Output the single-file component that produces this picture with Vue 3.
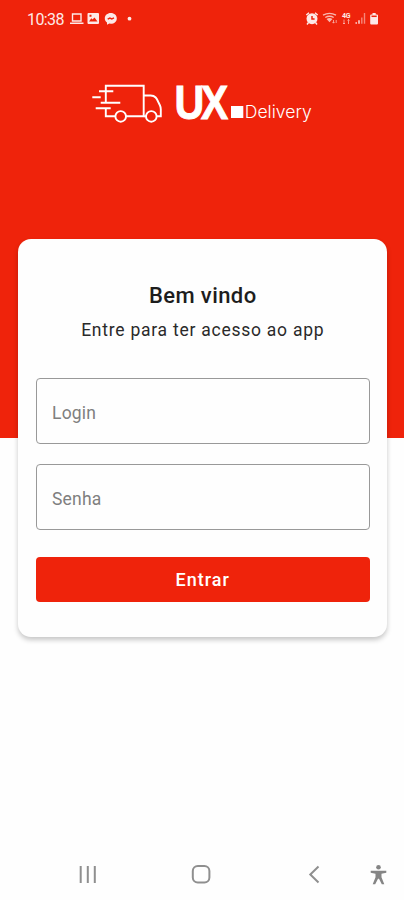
<template>
    <div class="screen">
        <header class="hero">
            <div class="status-bar">
                <span class="clock">10:38</span>
                <svg class="status-left" viewBox="68 8 68 22" width="68" height="22">
                    <path d="M72.500 14h8.500v7H72.500zM70 23.200h13.500" class="line" />
                    <path
                        d="M88.500 13h9.500a1 1 0 0 1 1 1v9a1 1 0 0 1-1 1h-9.500a1 1 0 0 1-1-1v-9a1 1 0 0 1 1-1zM89 21.500h8.500l-3-4-2 2-1.200-1.200zM89.500 14.700v2h2v-2z"
                        fill-rule="evenodd"
                    />
                    <path
                        d="M110.800 13c3.500 0 6 2.300 6 5.400s-2.500 5.300-6 5.300l-1.500-.2-2.300 1.200v-2.200c-1.400-1-2.200-2.400-2.200-4.100 0-3.100 2.500-5.400 6-5.400z"
                    />
                    <path d="M107.700 19.100l2.200-1 1.900.8 2.200-1" class="cut" />
                    <circle cx="129.500" cy="18.700" r="1.900" />
                </svg>
                <svg class="status-right" viewBox="304 8 78 22" width="78" height="22">
                    <circle cx="312" cy="18.700" r="5.500" />
                    <path d="M306.300 15l2.700-2.300M317.700 15l-2.700-2.300M308.500 22.500l-1.500 2M315.500 22.500l1.500 2" class="line" />
                    <path d="M312 16v3h2.600" class="cut" />
                    <g class="soft">
                        <path d="M323 15.200q6.500-3.700 13 0M325.300 17.500q4.200-2.600 8.400 0" class="line" />
                        <path d="M326.500 19l3 3.200 3-3.200q-3-1.800-6 0z" />
                        <path d="M333.500 20v3M332.500 22l1 1.200 1-1.200M336.200 23v-3" class="thin" />
                    </g>
                    <text x="342" y="17.800" class="network" textLength="8.500">4G</text>
                    <path d="M344 19.500v4.500M343 23l1 1 1-1M348.500 24v-4.500M347.500 20.500l1-1 1 1" class="thin soft" />
                    <path d="M356.200 23.800v-1.500M359 23.800v-3.500" class="line" />
                    <path d="M361.800 23.800v-6.300M364.500 23.800V13" class="line faint" />
                    <path d="M372.500 13h3.200v1.400h1.300a1 1 0 0 1 1 1v8a1 1 0 0 1-1 1h-5.800a1 1 0 0 1-1-1v-8a1 1 0 0 1 1-1h1.300z" />
                    <path d="M371.500 16.300h5.200" class="cut" />
                </svg>
            </div>
            <svg class="logo" viewBox="90 66 226 66" width="226" height="66">
                <g class="truck">
                    <path d="M105.800 102.700v-17h37.900v30.600H126M105.800 108v8.300h9.600" />
                    <path d="M143.700 95.500h7c4.800 0 6.200 3.400 7.600 6.500l1.700 3.500q.8 1.700.8 4v6.800h-4M143.700 116.300h2.300" />
                    <circle cx="120.700" cy="116.400" r="5.300" />
                    <circle cx="151.300" cy="116.400" r="5.300" />
                    <path d="M99 91.300h14.300M92.300 97.300h8.400M100.700 102.700h19.600M95.700 108.200h15" />
                </g>
                <text transform="translate(174.500 119) scale(0.86 1)" class="brand">UX</text>
                <rect x="231" y="106" width="12.300" height="12" />
                <text x="244.800" y="118" class="product" textLength="67" lengthAdjust="spacingAndGlyphs">Delivery</text>
            </svg>
        </header>

        <form class="card" @submit.prevent>
            <h1>Bem vindo</h1>
            <p>Entre para ter acesso ao app</p>
            <input v-model="login" type="text" placeholder="Login" />
            <input v-model="senha" type="password" placeholder="Senha" />
            <button type="submit">Entrar</button>
        </form>

        <nav class="nav-bar">
            <svg viewBox="0 0 404 50" width="404" height="50">
                <path d="M80.700 16v17M87.800 16v17M94.800 16v17" />
                <rect x="192.800" y="16" width="16.600" height="16.500" rx="5" />
                <path d="M318.500 16.500l-8.200 8 8.200 8" />
                <g class="person">
                    <circle cx="378.500" cy="17.200" r="2.300" />
                    <path d="M370.700 20.800h15.600v2l-4.800 1v3.400l2.800 7h-2.500l-2.800-5.400h-1l-2.800 5.400h-2.500l2.800-7v-3.400l-4.800-1z" />
                </g>
            </svg>
        </nav>
    </div>
</template>

<script setup>
import { ref } from "vue";

const login = ref("");
const senha = ref("");
</script>

<style>
body {
    margin: 0;
    background: #fefefe;
}
</style>

<style scoped>
.screen {
    display: flex;
    flex-direction: column;
    width: 404px;
    height: 900px;
    overflow: hidden;
    font-family: Roboto, "Liberation Sans", sans-serif;
    background: #fefefe;
}

.hero {
    flex: none;
    height: 438px;
    color: #fff;
    background: #ef230b;
}

.status-bar {
    display: flex;
    align-items: center;
    height: 38px;
    padding: 0 22px 0 27px;
}

.clock {
    width: 41px;
    padding-top: 2px;
    font-size: 16px;
    letter-spacing: -0.6px;
    line-height: 20px;
    opacity: 0.9;
}

.status-right {
    margin-left: auto;
}

svg {
    display: block;
    fill: #fff;
}

.status-bar svg {
    opacity: 0.9;
}

.line {
    fill: none;
    stroke: #fff;
    stroke-width: 1.4;
}

.thin {
    fill: none;
    stroke: #fff;
    stroke-width: 0.8;
}

.cut {
    fill: none;
    stroke: #ef230b;
    stroke-width: 1.5;
}

.soft {
    opacity: 0.75;
}

.faint {
    opacity: 0.5;
}

.network {
    font-size: 7px;
    font-weight: 700;
}

.logo {
    margin: 28px 0 0 90px;
}

.truck {
    fill: none;
    stroke: #fff;
    stroke-width: 1.9;
}

.brand {
    font-family: "Liberation Sans", sans-serif;
    font-size: 48px;
    font-weight: 700;
    letter-spacing: -4.2px;
    stroke: #fff;
    stroke-width: 0.9;
}

.product {
    font-family: Inter, sans-serif;
    font-size: 17px;
    font-weight: 300;
}

.card {
    box-sizing: border-box;
    display: flex;
    flex: none;
    flex-direction: column;
    width: 369px;
    height: 398px;
    margin: -199px 0 0 18px;
    padding: 43px 17.5px 35px 18px;
    border-radius: 13px;
    background: #fefefe;
    box-shadow: 0 3px 5px rgba(0, 0, 0, 0.22);
    text-align: center;
}

h1 {
    margin: 0;
    font-size: 22px;
    font-weight: 500;
    line-height: 28px;
    letter-spacing: 0.4px;
    color: #1d1d1d;
}

p {
    margin: 8px 0 35px;
    font-size: 17.5px;
    line-height: 25px;
    letter-spacing: 0.75px;
    color: #2a2a2a;
}

input {
    box-sizing: border-box;
    width: 100%;
    height: 66px;
    margin: 0 0 20px;
    padding: 4px 15px 0;
    border: 1px solid #999;
    border-radius: 4px;
    outline: none;
    background: transparent;
    font: 17.5px Roboto, sans-serif;
    letter-spacing: 0.2px;
}

input::placeholder {
    color: #7f7f7f;
    opacity: 1;
}

button {
    height: 45px;
    margin-top: 7px;
    padding: 0;
    border: 0;
    border-radius: 4px;
    background: #ef230b;
    color: #fff;
    font: 500 18px Roboto, sans-serif;
    letter-spacing: 1px;
}

.nav-bar {
    margin-top: auto;
}

.nav-bar svg {
    fill: none;
    stroke: #8f8f8f;
    stroke-width: 2;
}

.nav-bar .person {
    fill: #858585;
    stroke: none;
}
</style>
